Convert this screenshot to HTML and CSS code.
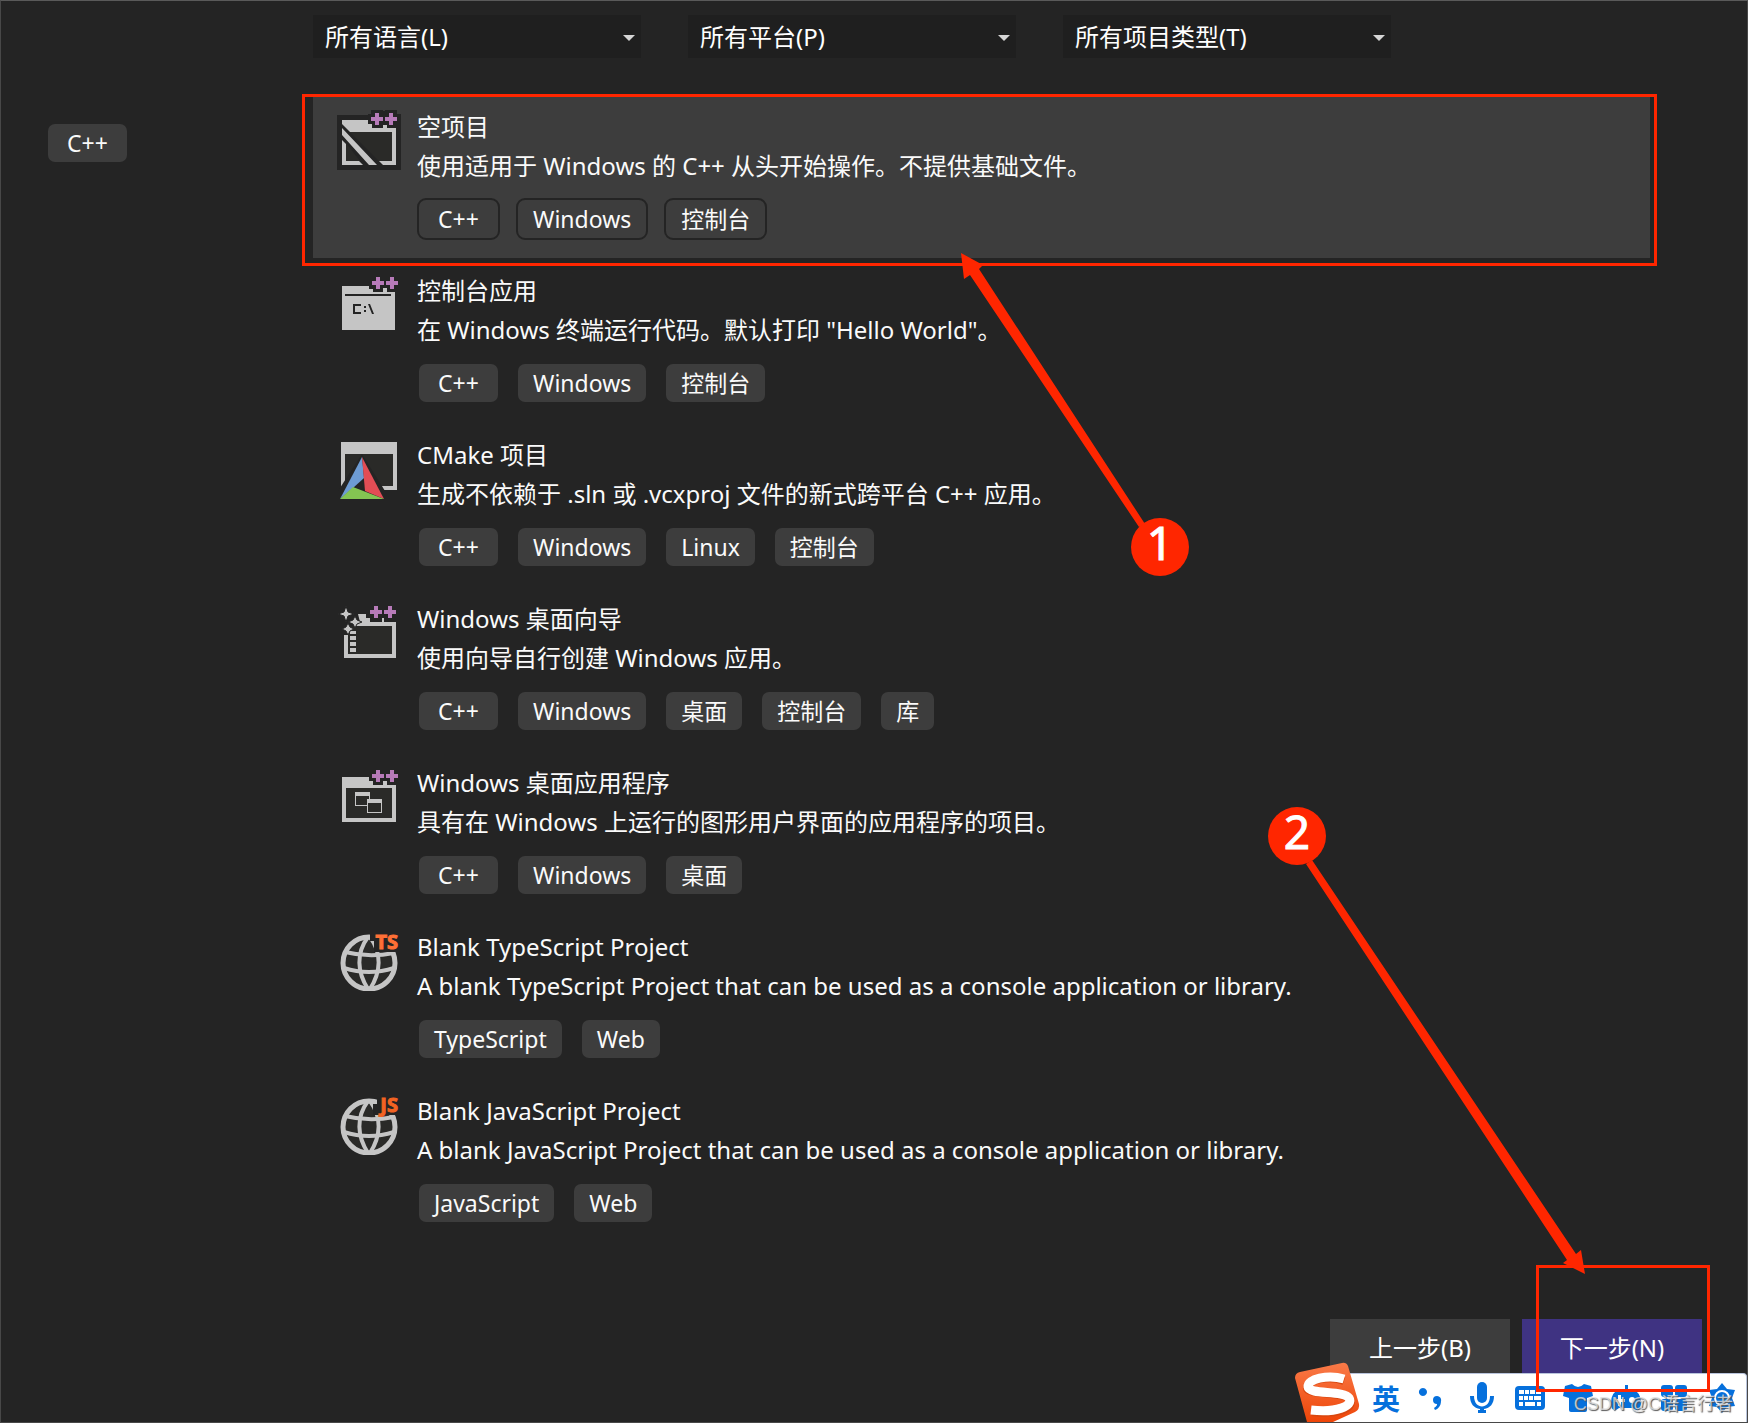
FILE: index.html
```
<!DOCTYPE html>
<html lang="zh-CN">
<head>
    <meta charset="UTF-8">
    <meta name="viewport" content="width=device-width, initial-scale=1.0">
    <title>创建新项目</title>
    <link rel="stylesheet" href="styles.css">
</head>
<body>
    <!-- Shared icon parts -->
    <svg class="defs" width="0" height="0" aria-hidden="true">
        <symbol id="plusplus" viewBox="0 0 28 14">
            <path fill="#b77bb9" d="M5 1h4v4h4v4H9v4H5V9H1V5h4zM19 1h4v4h4v4h-4v4h-4V9h-4V5h4z"/>
        </symbol>
        <symbol id="globe" viewBox="0 0 64 64">
            <circle cx="32" cy="36" r="26" fill="#2a2a28"/>
            <g fill="none" stroke="#c5c5c5" stroke-width="4">
                <circle cx="32" cy="36" r="26" stroke-width="5"/>
                <path d="M31 10C19 26 20 45 31 62M33 10C45 26 44 45 33 62"/>
                <path d="M8 25Q32 31 57 26M7 41Q32 49 57 41"/>
            </g>
        </symbol>
    </svg>

    <div class="page">
        <!-- Filters -->
        <div class="filters">
            <div class="filter">
                <select aria-label="语言"><option>所有语言(L)</option></select>
            </div>
            <div class="filter">
                <select aria-label="平台"><option>所有平台(P)</option></select>
            </div>
            <div class="filter">
                <select aria-label="项目类型"><option>所有项目类型(T)</option></select>
            </div>
        </div>

        <div class="content">
            <!-- Recent templates -->
            <aside class="recent">
                <span class="tag">C++</span>
            </aside>

            <!-- Template list -->
            <ul class="templates">
                <li class="template selected">
                    <svg class="icon" viewBox="0 0 64 64">
                        <path fill="#242424" d="M0 8h31V7h3V3h12v1h2V3h12v4h4v56H0z"/>
                        <path fill="#c5c5c5" d="M5 13h26v4h4v4h11v-3h4v3h9v37H5z"/>
                        <path fill="#2a2a28" d="M9 25h46v29H9z"/>
                        <path fill="#242424" d="M5 17v19l20 22h21z"/>
                        <path fill="#2a2a28" d="M9 36v18h14z"/>
                        <path fill="#c5c5c5" d="M5 21v7l27 30h8zM5 33v25h21l-4-4H9V37z"/>
                        <use href="#plusplus" x="33" y="5" width="28" height="14"/>
                    </svg>
                    <div class="info">
                        <h2>空项目</h2>
                        <p>使用适用于 Windows 的 C++ 从头开始操作。不提供基础文件。</p>
                        <div class="tags">
                            <span class="tag">C++</span>
                            <span class="tag">Windows</span>
                            <span class="tag">控制台</span>
                        </div>
                    </div>
                </li>
                <li class="template">
                    <svg class="icon" viewBox="0 0 64 64">
                        <path fill="#c5c5c5" d="M5 15h27v3h4v3h10v-4h4v4h8v38H5z"/>
                        <path fill="#242424" d="M8 23h46v2H8zM16 33h8v2h-6v6h6v2h-8zM27 35h2v2h-2zM27 39h2v2h-2zM31 33h2l4 10h-2z"/>
                        <use href="#plusplus" x="34" y="5" width="28" height="14"/>
                    </svg>
                    <div class="info">
                        <h2>控制台应用</h2>
                        <p>在 Windows 终端运行代码。默认打印 "Hello World"。</p>
                        <div class="tags">
                            <span class="tag">C++</span>
                            <span class="tag">Windows</span>
                            <span class="tag">控制台</span>
                        </div>
                    </div>
                </li>
                <li class="template">
                    <svg class="icon" viewBox="0 0 64 64">
                        <path fill="#c5c5c5" d="M4 7h56v48H4z"/>
                        <path fill="#2a2a28" d="M8 19h48v32H8z"/>
                        <path fill="#242424" d="M25 19L1 56v8h52z"/>
                        <path fill="#6d9bd3" d="M25 22l2 21-11 10L3 64z"/>
                        <path fill="#e24d55" d="M25 22l22 42-19-8z"/>
                        <path fill="#84c452" d="M16 52l31 12H3z"/>
                    </svg>
                    <div class="info">
                        <h2>CMake 项目</h2>
                        <p>生成不依赖于 .sln 或 .vcxproj 文件的新式跨平台 C++ 应用。</p>
                        <div class="tags">
                            <span class="tag">C++</span>
                            <span class="tag">Windows</span>
                            <span class="tag">Linux</span>
                            <span class="tag">控制台</span>
                        </div>
                    </div>
                </li>
                <li class="template">
                    <svg class="icon" viewBox="0 0 64 64">
                        <path fill="#2a2a28" d="M11 27h44v28H11z"/>
                        <path fill="#c5c5c5" d="M21 15h8v4h4v4h12v-4h2v4h12v36H7V36h4v19h44V27H19v-4h4z"/>
                        <path fill="#c5c5c5" d="M13 32h6v3h-6zM13 37h6v4h-6zM13 43h6v4h-6zM13 49h6v4h-6z"/>
                        <path fill="#c5c5c5" stroke="#242424" d="M9 7l2 6 6 2-6 2-2 6-2-6-6-2 6-2zM18 17l2 4 5 2-5 2-2 4-2-4-5-2 5-2zM11 24l2 4 4 2-4 2-2 4-2-4-4-2 4-2z"/>
                        <use href="#plusplus" x="32" y="6" width="28" height="14"/>
                    </svg>
                    <div class="info">
                        <h2>Windows 桌面向导</h2>
                        <p>使用向导自行创建 Windows 应用。</p>
                        <div class="tags">
                            <span class="tag">C++</span>
                            <span class="tag">Windows</span>
                            <span class="tag">桌面</span>
                            <span class="tag">控制台</span>
                            <span class="tag">库</span>
                        </div>
                    </div>
                </li>
                <li class="template">
                    <svg class="icon" viewBox="0 0 64 64">
                        <path fill="#c5c5c5" d="M5 14h27v4h4v4h10v-4h4v4h9v37H5z"/>
                        <path fill="#2a2a28" d="M9 25h46v30H9z"/>
                        <path fill="#c5c5c5" d="M18 29h15v14H18z"/>
                        <path fill="#2a2a28" d="M19 33h13v9H19z"/>
                        <path fill="#c5c5c5" d="M30 36h15v14H30z"/>
                        <path fill="#2a2a28" d="M31 40h13v9H31z"/>
                        <use href="#plusplus" x="34" y="6" width="28" height="14"/>
                    </svg>
                    <div class="info">
                        <h2>Windows 桌面应用程序</h2>
                        <p>具有在 Windows 上运行的图形用户界面的应用程序的项目。</p>
                        <div class="tags">
                            <span class="tag">C++</span>
                            <span class="tag">Windows</span>
                            <span class="tag">桌面</span>
                        </div>
                    </div>
                </li>
                <li class="template">
                    <svg class="icon" viewBox="0 0 64 64">
                        <use href="#globe" width="64" height="64"/>
                        <path fill="#242424" d="M33 6h31v19H37V14h-4z"/>
                        <text class="lang ts" x="61" y="22">TS</text>
                    </svg>
                    <div class="info">
                        <h2>Blank TypeScript Project</h2>
                        <p>A blank TypeScript Project that can be used as a console application or library.</p>
                        <div class="tags">
                            <span class="tag">TypeScript</span>
                            <span class="tag">Web</span>
                        </div>
                    </div>
                </li>
                <li class="template">
                    <svg class="icon" viewBox="0 0 64 64">
                        <use href="#globe" width="64" height="64"/>
                        <path fill="#242424" d="M40 6h24v18H36v-11h4z"/>
                        <text class="lang js" x="61" y="21">JS</text>
                    </svg>
                    <div class="info">
                        <h2>Blank JavaScript Project</h2>
                        <p>A blank JavaScript Project that can be used as a console application or library.</p>
                        <div class="tags">
                            <span class="tag">JavaScript</span>
                            <span class="tag">Web</span>
                        </div>
                    </div>
                </li>
            </ul>
        </div>

        <div class="footer">
            <button type="button">上一步(B)</button>
            <button type="button" class="next">下一步(N)</button>
        </div>

        <!-- Input method toolbar -->
        <div class="ime">
            <svg class="ime-logo" viewBox="0 0 66 60">
                <defs>
                    <linearGradient id="orange" x1="0" y1="0" x2="0" y2="1">
                        <stop offset="0" stop-color="#f97a48"/>
                        <stop offset="1" stop-color="#ee4508"/>
                    </linearGradient>
                </defs>
                <path fill="url(#orange)" d="M6 10L48 1q4-1 6 3l11 38q1 5-4 8l-22 10H13L1 16q0-5 5-6z"/>
                <path fill="none" stroke="#d8470f" stroke-width="8" d="M50 19C34 13 13 18 13 26s38 3 43 12-14 15-38 12"/>
                <path fill="none" stroke="#fff" stroke-width="9" d="M50 17C34 12 13 17 14 25s36 3 41 11-13 15-38 12"/>
            </svg>
            <button type="button" class="ime-lang">英</button>
            <button type="button" aria-label="标点">
                <svg viewBox="0 0 32 32"><path d="M5 6a4 4 0 1 1-.1 0zM19 14a4 4 0 0 1 4 5c0 5-3 8-6 9l-1-2c3-2 3-3 3-4a4 4 0 0 1 0-8z"/></svg>
            </button>
            <button type="button" aria-label="语音">
                <svg viewBox="0 0 32 32"><rect x="11" y="0" width="10" height="21" rx="5"/><path d="M4 14h4c0 14 16 14 16 0h4c0 8-4 12-10 13v1h2v3h-8v-3h2v-1C8 26 4 22 4 14z"/></svg>
            </button>
            <button type="button" aria-label="键盘">
                <svg viewBox="0 0 32 32"><rect x="1" y="4" width="30" height="24" rx="4"/><path fill="#fff" d="M5 8h5v4H5zM11 8h4v4h-4zM16 8h5v4h-5zM22 8h5v4h-5zM5 14h4v4H5zM10 14h4v4h-4zM15 14h4v4h-4zM20 14h7v4h-7zM5 20h4v4H5zM11 20h10v4H11zM23 20h4v4h-4z"/></svg>
            </button>
            <button type="button" aria-label="皮肤">
                <svg viewBox="0 0 32 32"><path d="M3 4l7-2q6 6 12 0l7 2 2 10-6 2v12q0 2-2 2H9q-2 0-2-2V16l-6-2z"/></svg>
            </button>
            <button type="button" aria-label="游戏">
                <svg viewBox="0 0 32 32"><path d="M15 3h3v5h5q8 2 8 13c0 9-5 8-8 5H9c-3 3-8 4-8-5Q1 10 9 8h6z"/><path fill="#fff" d="M8 13h3v4h4v3h-4v4H8v-4H5v-3h3z"/><circle cx="22" cy="18" r="3" fill="#fff"/></svg>
            </button>
            <button type="button" aria-label="工具箱">
                <svg viewBox="0 0 32 32"><rect x="3" y="3" width="12" height="12" rx="3"/><rect x="17" y="3" width="12" height="12" rx="3"/><rect x="3" y="17" width="12" height="12" rx="3"/><rect x="17" y="17" width="12" height="12" rx="3"/></svg>
            </button>
            <button type="button" aria-label="设置">
                <svg viewBox="0 0 32 32"><path d="M16 1l5 6 8 1-3 8 3 8-8 1-5 6-5-6-8-1 3-8-3-8 8-1z"/><circle cx="16" cy="16" r="7" fill="none" stroke="#fff" stroke-width="2"/></svg>
            </button>
        </div>

        <!-- Step markers drawn over the dialog -->
        <svg class="marks" width="1748" height="1423" viewBox="0 0 1748 1423">
            <g fill="none" stroke="#ff2600" stroke-width="3">
                <rect x="303.5" y="95.5" width="1352" height="169"/>
                <rect x="1537.5" y="1266.5" width="171" height="124"/>
            </g>
            <g fill="#ff2600">
                <path d="M961 253L983 265L979 269L1145 524L1139 527L970 275L964 279z"/>
                <path d="M1585 1274L1581 1250L1576 1254L1312 860L1306 864L1567 1260L1563 1263z"/>
                <circle cx="1160" cy="547" r="29"/>
                <circle cx="1297" cy="836" r="29"/>
            </g>
            <text x="1160" y="560">1</text>
            <text x="1297" y="849">2</text>
        </svg>

        <div class="watermark">CSDN @C语言行者</div>
    </div>
</body>
</html>
```
FILE: styles.css
```
* {
    box-sizing: border-box;
}
body {
    margin: 0;
    background-color: #242424;
    color: #fafafa;
    font-family: "Noto Sans", "Noto Sans CJK SC", sans-serif;
    font-size: 24px;
}
.defs {
    position: absolute;
}
.page {
    position: relative;
    display: flex;
    flex-direction: column;
    min-height: 100vh;
    border: 1px solid #484848;
    border-top-color: #5a5a5a;
    overflow: hidden;
}

/* Filters */
.filters {
    display: flex;
    gap: 47px;
    padding: 14px 0 36px 312px;
}
.filter {
    position: relative;
    width: 328px;
}
.filter::after {
    content: "";
    position: absolute;
    right: 6px;
    top: 20px;
    border: 6px solid transparent;
    border-top-color: #d6d6d6;
    border-bottom: 0;
    pointer-events: none;
}
select {
    appearance: none;
    display: block;
    width: 100%;
    height: 43px;
    padding: 0 12px;
    border: 0;
    border-radius: 0;
    background-color: #1f1f1f;
    color: #fff;
    font: inherit;
}

/* Template list */
.content {
    display: flex;
}
.recent {
    width: 312px;
    padding: 28px 0 0 45px;
}
.templates {
    flex: 1;
    margin: 0 97px 0 0;
    padding: 0;
    list-style: none;
}
.template {
    display: flex;
    gap: 16px;
    height: 164px;
    padding: 13px 24px;
}
.template.selected {
    background-color: #3d3d3d;
}
.icon {
    width: 64px;
    height: 64px;
    flex: none;
}
.lang {
    font-size: 20px;
    font-weight: bold;
    text-anchor: end;
}
.ts {
    fill: #ff7036;
    stroke: #ff7036;
}
.js {
    fill: #f26322;
    stroke: #f26322;
}
h2, p {
    margin: 0;
    font-size: 24px;
    font-weight: normal;
    line-height: 39px;
}
.tags {
    display: flex;
    gap: 16px;
    margin-top: 13px;
}
.tag {
    display: inline-block;
    height: 42px;
    padding: 0 15px;
    border: 2px solid transparent;
    border-radius: 9px;
    background-color: #3d3d3d;
    background-clip: padding-box;
    font-size: 23px;
    line-height: 38px;
    text-align: center;
}
.recent .tag, .tag:first-child {
    min-width: 83px;
}
.selected .tag {
    border-color: #242424;
}

/* Footer */
.footer {
    display: flex;
    justify-content: flex-end;
    gap: 12px;
    margin-top: auto;
    padding: 0 45px 48px;
}
.footer button {
    width: 180px;
    height: 55px;
    padding: 0;
    border: 0;
    background-color: #3d3d3d;
    color: #fff;
    font: inherit;
}
.footer .next {
    background-color: #3f3382;
}

/* Input method toolbar */
.ime {
    position: absolute;
    right: 0;
    bottom: 0;
    display: flex;
    height: 49px;
    padding: 0 0 0 44px;
    border-top: 1px solid #b9c4dc;
    border-right: 1px solid #b9c4dc;
    border-radius: 0 4px 0 0;
    background-color: #fff;
}
.ime button {
    display: flex;
    align-items: center;
    justify-content: center;
    width: 48px;
    padding: 0;
    border: 0;
    background: none;
}
.ime button svg {
    width: 32px;
    height: 32px;
    fill: #0670dc;
}
.ime .ime-lang {
    color: #0670dc;
    font-family: "Noto Sans CJK SC", sans-serif;
    font-size: 28px;
    font-weight: bold;
}
.ime-logo {
    position: absolute;
    left: -24px;
    bottom: 0;
    width: 66px;
    height: 60px;
}

/* Overlays */
.marks {
    position: absolute;
    left: -1px;
    top: -1px;
    pointer-events: none;
}
.marks text {
    fill: #fff;
    stroke: #fff;
    font-size: 46px;
    text-anchor: middle;
}
.watermark {
    position: absolute;
    right: 14px;
    bottom: 4px;
    color: rgba(225, 225, 225, 0.8);
    font-family: "Liberation Sans", "Noto Sans CJK SC", sans-serif;
    font-size: 18px;
    line-height: 28px;
    text-shadow: 1px 1px 1px #555;
}
```
